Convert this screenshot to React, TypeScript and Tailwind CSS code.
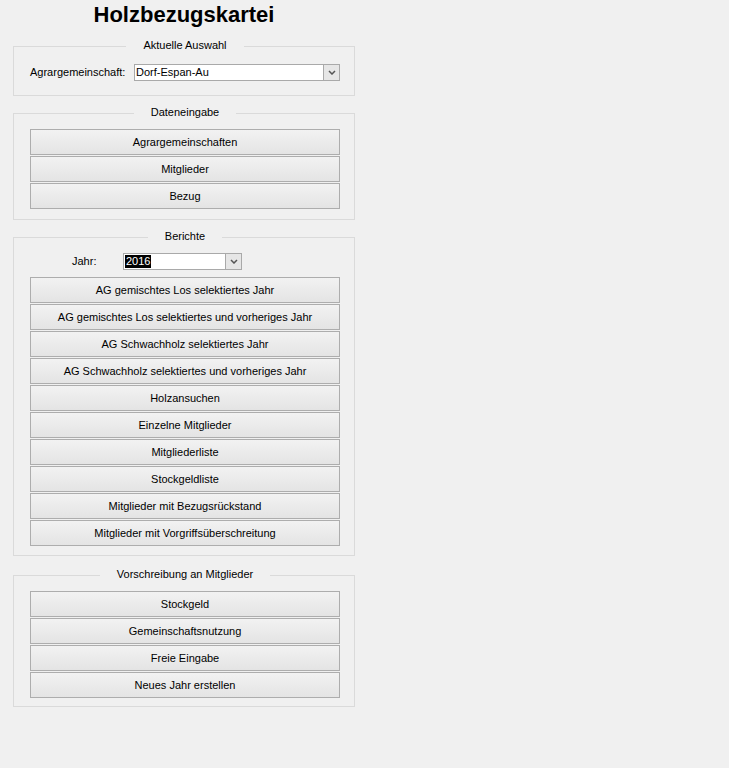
import React from "react";

const Chevron = () => (
  <svg width="8" height="5" viewBox="0 0 8 5" className="block">
    <path d="M1 1 L4 4 L7 1" fill="none" stroke="#555555" strokeWidth="1.5" />
  </svg>
);

const Combo = ({ value, selected, width }: { value: string; selected?: boolean; width: string }) => (
  <div className={`${width} h-[17px] flex border border-[#a9a9a9] bg-white`}>
    <div className="flex-1 flex items-center pl-[1px] text-[11px] leading-[13px] text-black overflow-hidden">
      {selected ? <span className="bg-black text-white px-[1px]">{value}</span> : <span>{value}</span>}
    </div>
    <div className="w-[16px] h-full flex items-center justify-center bg-[#e6e6e6] border-l border-[#a9a9a9]">
      <Chevron />
    </div>
  </div>
);

const Btn = ({ label }: { label: string }) => (
  <button className="w-[310px] h-[26px] flex items-center justify-center border border-[#adadad] bg-linear-to-b from-[#f2f2f2] to-[#e4e4e4] text-[11px] leading-[13px] text-black">
    {label}
  </button>
);

const Group = ({
  title,
  className,
  children,
}: {
  title: string;
  className: string;
  children: React.ReactNode;
}) => (
  <fieldset className={`border border-[#dadada] pl-[16px] pr-[14px] ${className}`}>
    <legend className="mx-auto px-[17px] pb-[2px] text-[11px] leading-[13px] text-black">{title}</legend>
    {children}
  </fieldset>
);

export default function App() {
  const berichte = [
    "AG gemischtes Los selektiertes Jahr",
    "AG gemischtes Los selektiertes und vorheriges Jahr",
    "AG Schwachholz selektiertes Jahr",
    "AG Schwachholz selektiertes und vorheriges Jahr",
    "Holzansuchen",
    "Einzelne Mitglieder",
    "Mitgliederliste",
    "Stockgeldliste",
    "Mitglieder mit Bezugsrückstand",
    "Mitglieder mit Vorgriffsüberschreitung",
  ];
  return (
    <div
      className="w-[729px] h-[768px] bg-[#f0f0f0] overflow-hidden"
      style={{ fontFamily: '"Liberation Sans", Arial, sans-serif' }}
    >
      <div className="ml-[13px] w-[342px] flex flex-col">
        <h1 className="pt-[2px] text-center text-[22px] leading-[26px] font-bold text-black">Holzbezugskartei</h1>

        <Group title="Aktuelle Auswahl" className="mt-[11px] pt-[10px] pb-[14px]">
          <div className="flex items-center">
            <span className="w-[104px] text-[11px] leading-[13px] text-black">Agrargemeinschaft:</span>
            <Combo value="Dorf-Espan-Au" width="w-[206px]" />
          </div>
        </Group>

        <Group title="Dateneingabe" className="mt-[10px] pt-[8px] pb-[10px]">
          <div className="flex flex-col gap-[1px]">
            <Btn label="Agrargemeinschaften" />
            <Btn label="Mitglieder" />
            <Btn label="Bezug" />
          </div>
        </Group>

        <Group title="Berichte" className="mt-[10px] pt-[8px] pb-[9px]">
          <div className="flex items-center ml-[42px]">
            <span className="w-[51px] text-[11px] leading-[13px] text-black">Jahr:</span>
            <Combo value="2016" selected width="w-[119px]" />
          </div>
          <div className="mt-[7px] flex flex-col gap-[1px]">
            {berichte.map((b) => (
              <Btn key={b} label={b} />
            ))}
          </div>
        </Group>

        <Group title="Vorschreibung an Mitglieder" className="mt-[12px] pt-[8px] pb-[8px]">
          <div className="flex flex-col gap-[1px]">
            <Btn label="Stockgeld" />
            <Btn label="Gemeinschaftsnutzung" />
            <Btn label="Freie Eingabe" />
            <Btn label="Neues Jahr erstellen" />
          </div>
        </Group>
      </div>
    </div>
  );
}
